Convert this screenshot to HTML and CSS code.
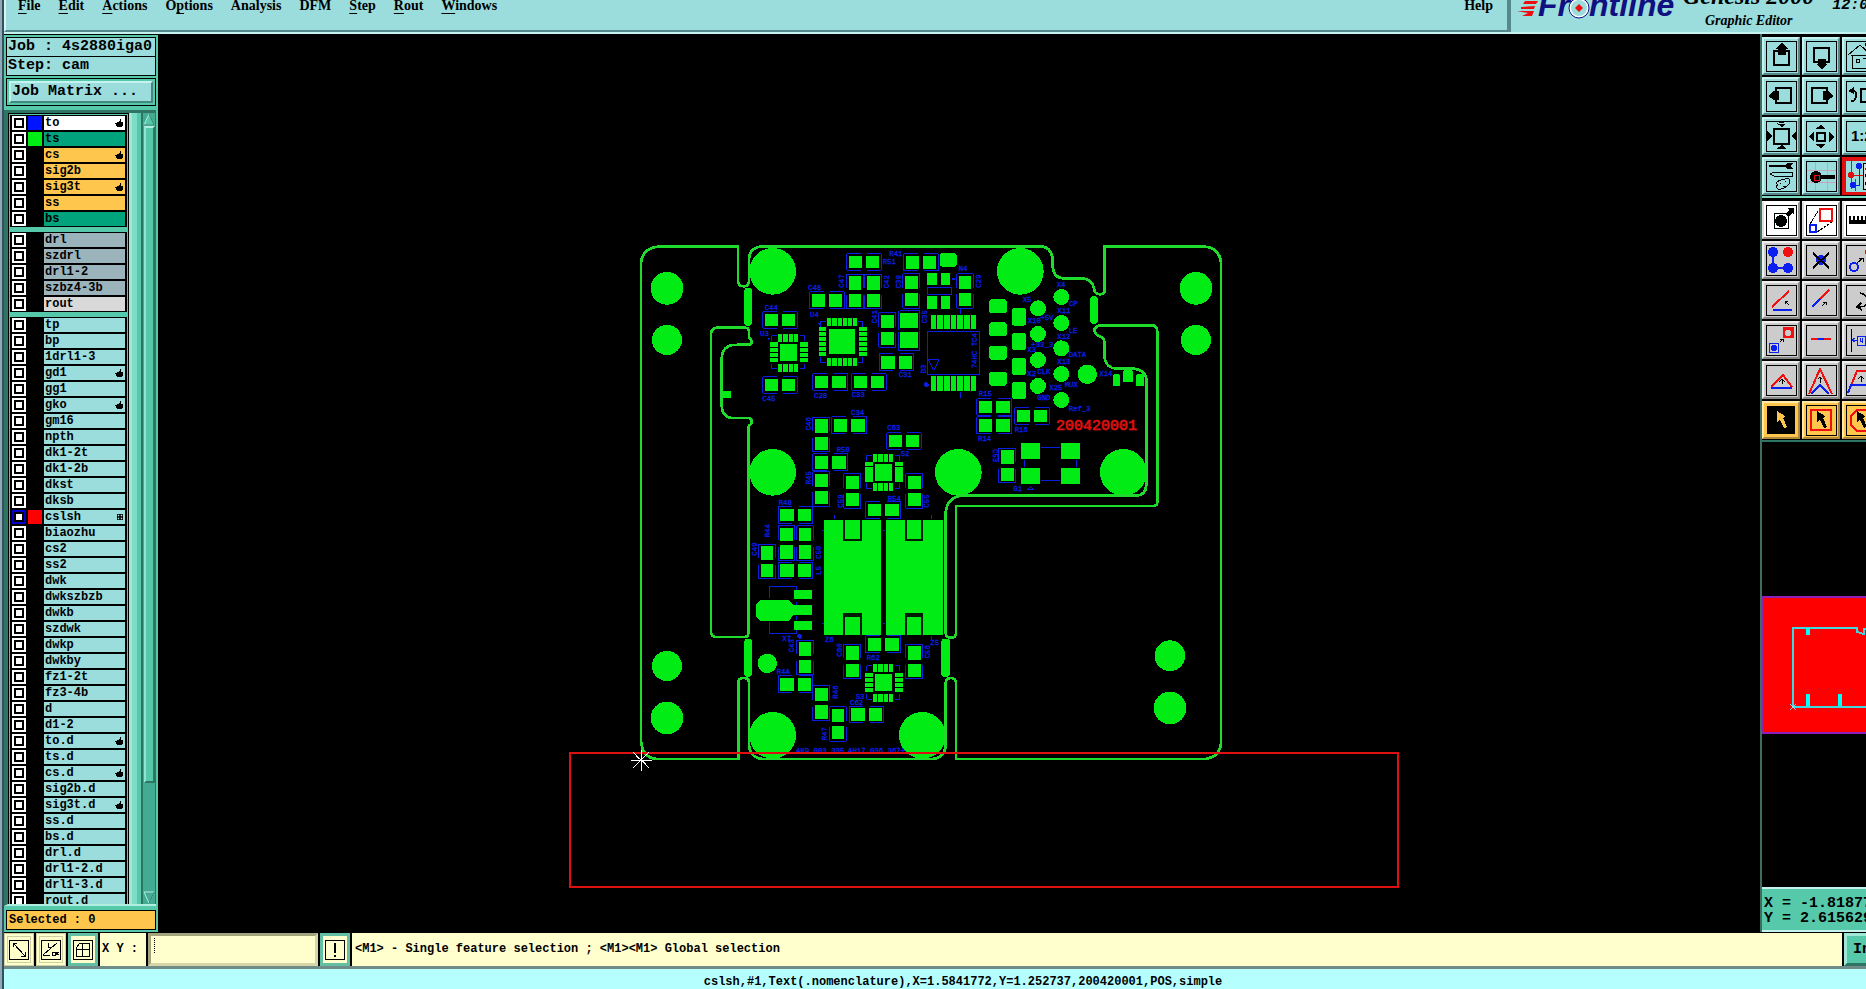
FILE: index.html
```html
<!DOCTYPE html>
<html lang="en">
<head>
<meta charset="utf-8">
<title>Genesis 2000 Graphic Editor</title>
<link rel="stylesheet" href="styles.css">
</head>
<body>
<svg class="defs" aria-hidden="true">
  <defs>
    <symbol id="hand" viewBox="0 0 8 8"><path d="M0 4h2V3h2V2h1V0h1v3h2v4H7v1H2V7H1V5H0z"/></symbol>
    <symbol id="grid" viewBox="0 0 6 6"><path d="M0 0h6v6H0z"/><path d="M1 1h1v1H1zM4 1h1v1H4zM1 4h1v1H1zM4 4h1v1H4z" fill="#9bdcdc" stroke="#9bdcdc" stroke-width=".6"/></symbol>
    <g id="rh"><path class="silk" d="M-10-25H-52V25H-10M10-25H52V25H10"/><path class="pad" d="M-46-19h40v38h-40zM6-19h40v38H6z"/></g>
    <g id="rv"><path class="silk" d="M-25-10V-52H25V-10M-25 10V52H25V10"/><path class="pad" d="M-19-46h38v40h-38zM-19 6h38v40h-38z"/></g>
    <g id="qfn"><path class="silk" d="M-50-34V-50H-34M34-50H50V-34M50 34V50H34M-34 50H-50V34"/>
      <path class="pad" d="M-25-25h51v51h-51z"/>
      <path class="pin" d="M-24-55v24M-8-55v24M8-55v24M24-55v24M-24 34v24M-8 34v24M8 34v24M24 34v24M-55-23h24M-55-7h24M-55 8h24M-55 23h24M35-23h24M35-7h24M35 8h24M35 23h24"/></g>
    <path id="ptr" d="M0 0l8 5-2 2 4 9-3 1-4-8-3 2z"/>
  </defs>
</svg>

<header class="top">
  <nav class="menus">
    <button><u>F</u>ile</button><button><u>E</u>dit</button><button><u>A</u>ctions</button><button>O<u>p</u>tions</button><button>Analysis</button><button>DFM</button><button><u>S</u>tep</button><button><u>R</u>out</button><button><u>W</u>indows</button><button class="help">Help</button>
  </nav>
  <div class="brand">
    <svg class="logo" width="166" height="30" viewBox="0 0 166 30" role="img" aria-label="Frontline">
      <path d="M12 1h13l-2 3H10zM8 7l14-1-1 3H8zM4 11h17l-2 5H9l6-3z" fill="#f00c0c"/>
      <text x="25" y="16" class="logotext">Fr</text>
      <text x="76" y="16" class="logotext">ntline</text>
      <circle cx="66" cy="8" r="9" fill="#9bdcdc" stroke="#fff" stroke-width="2"/>
      <circle cx="66" cy="8" r="10" fill="none" stroke="#101080"/>
      <path d="M66 4l4 4-4 4-4-4z" fill="#f00c0c"/>
    </svg>
    <div class="titles"><strong>Genesis 2000</strong><em>Graphic Editor</em></div>
    <time>12:03</time>
  </div>
</header>

<main class="work">
  <aside class="side">
    <div class="job"><p>Job : 4s2880iga0</p><p>Step: cam</p></div>
    <div class="matrix"><button>Job Matrix ...</button></div>
    <div class="layers">
      <div class="list">
        <div class="group">
          <label><input type="checkbox"><i class="blue"></i><b class="white">to<svg><use href="#hand"/></svg></b></label>
          <label><input type="checkbox"><i class="green"></i><b class="teal">ts</b></label>
          <label><input type="checkbox"><i></i><b class="gold">cs<svg><use href="#hand"/></svg></b></label>
          <label><input type="checkbox"><i></i><b class="gold">sig2b</b></label>
          <label><input type="checkbox"><i></i><b class="gold">sig3t<svg><use href="#hand"/></svg></b></label>
          <label><input type="checkbox"><i></i><b class="gold">ss</b></label>
          <label><input type="checkbox"><i></i><b class="teal">bs</b></label>
        </div>
        <div class="group">
          <label><input type="checkbox"><i></i><b class="slate">drl</b></label>
          <label><input type="checkbox"><i></i><b class="slate">szdrl</b></label>
          <label><input type="checkbox"><i></i><b class="slate">drl1-2</b></label>
          <label><input type="checkbox"><i></i><b class="slate">szbz4-3b</b></label>
          <label><input type="checkbox"><i></i><b class="silver">rout</b></label>
        </div>
        <div class="group">
          <label><input type="checkbox"><i></i><b>tp</b></label>
          <label><input type="checkbox"><i></i><b>bp</b></label>
          <label><input type="checkbox"><i></i><b>1drl1-3</b></label>
          <label><input type="checkbox"><i></i><b>gd1<svg><use href="#hand"/></svg></b></label>
          <label><input type="checkbox"><i></i><b>gg1</b></label>
          <label><input type="checkbox"><i></i><b>gko<svg><use href="#hand"/></svg></b></label>
          <label><input type="checkbox"><i></i><b>gm16</b></label>
          <label><input type="checkbox"><i></i><b>npth</b></label>
          <label><input type="checkbox"><i></i><b>dk1-2t</b></label>
          <label><input type="checkbox"><i></i><b>dk1-2b</b></label>
          <label><input type="checkbox"><i></i><b>dkst</b></label>
          <label><input type="checkbox"><i></i><b>dksb</b></label>
          <label><input type="checkbox" checked><i class="red"></i><b>cslsh<svg class="small"><use href="#grid"/></svg></b></label>
          <label><input type="checkbox"><i></i><b>biaozhu</b></label>
          <label><input type="checkbox"><i></i><b>cs2</b></label>
          <label><input type="checkbox"><i></i><b>ss2</b></label>
          <label><input type="checkbox"><i></i><b>dwk</b></label>
          <label><input type="checkbox"><i></i><b>dwkszbzb</b></label>
          <label><input type="checkbox"><i></i><b>dwkb</b></label>
          <label><input type="checkbox"><i></i><b>szdwk</b></label>
          <label><input type="checkbox"><i></i><b>dwkp</b></label>
          <label><input type="checkbox"><i></i><b>dwkby</b></label>
          <label><input type="checkbox"><i></i><b>fz1-2t</b></label>
          <label><input type="checkbox"><i></i><b>fz3-4b</b></label>
          <label><input type="checkbox"><i></i><b>d</b></label>
          <label><input type="checkbox"><i></i><b>d1-2</b></label>
          <label><input type="checkbox"><i></i><b>to.d<svg><use href="#hand"/></svg></b></label>
          <label><input type="checkbox"><i></i><b>ts.d</b></label>
          <label><input type="checkbox"><i></i><b>cs.d<svg><use href="#hand"/></svg></b></label>
          <label><input type="checkbox"><i></i><b>sig2b.d</b></label>
          <label><input type="checkbox"><i></i><b>sig3t.d<svg><use href="#hand"/></svg></b></label>
          <label><input type="checkbox"><i></i><b>ss.d</b></label>
          <label><input type="checkbox"><i></i><b>bs.d</b></label>
          <label><input type="checkbox"><i></i><b>drl.d</b></label>
          <label><input type="checkbox"><i></i><b>drl1-2.d</b></label>
          <label><input type="checkbox"><i></i><b>drl1-3.d</b></label>
          <label><input type="checkbox"><i></i><b>rout.d</b></label>
        </div>
      </div>
      <div class="edge"></div>
      <div class="scroll">
        <svg width="12" height="13" viewBox="0 0 12 13"><path d="M6 1L1 12h10z" fill="#55c9aa" stroke="#b0efe0"/><path d="M6 1l5 11H1" fill="none" stroke="#2b7a66"/></svg>
        <div class="thumb"></div>
        <svg width="12" height="13" viewBox="0 0 12 13"><path d="M6 12L1 1h10z" fill="#43ab92" stroke="#b0efe0"/><path d="M6 12l5-11" fill="none" stroke="#2b7a66"/></svg>
      </div>
    </div>
    <p class="selected">Selected : 0</p>
  </aside>

  <section class="canvas">
    <svg viewBox="158 34 1602 898" role="img" aria-label="Board layout">
      <g transform="translate(630 235) scale(.33333)">
        <g class="silk">
          <path d="M892 157h73v21h-73zM892 289h157v129H892zM895 374h32l-16 32zM810 228h59v58M805 290v56h65v-58M807 228v56"/>
          <path d="M573 275v-16h16M683 259h16v16M699 367v16h-16M589 383h-16v-16"/>
          <path d="M418 1088v-33h82v20M500 1100v12M500 1142v12M418 1160v35h82v-12"/>
          <path d="M1234 637h55M1234 737h55M1184 675v20M1340 675v20M613 840v12M906 840v12M576 887h6M758 887h8M576 1165h6M758 1165h8M993 222v14M993 472v16M906 1203v12"/>
          <path d="M1192 764l10-9 10 9z"/>
          <circle cx="889" cy="449" r="6" fill="#0a1fe0"/><circle cx="509" cy="1204" r="6" fill="#0a1fe0"/><circle cx="970" cy="132" r="3" fill="#0a1fe0"/><circle cx="568" cy="267" r="2"/><circle cx="417" cy="311" r="2"/>
        </g>
        <g>
          <use href="#rh" x="702" y="81"/><use href="#rh" x="873" y="82"/><use href="#rh" x="591" y="196"/><use href="#rh" x="450" y="255"/><use href="#rh" x="450" y="450"/><use href="#rh" x="601" y="441"/><use href="#rh" x="717" y="441"/><use href="#rh" x="800" y="382"/><use href="#rh" x="658" y="571"/><use href="#rh" x="822" y="618"/><use href="#rh" x="601" y="682"/><use href="#rh" x="1093" y="516"/><use href="#rh" x="1093" y="571"/><use href="#rh" x="1206" y="543"/><use href="#rh" x="497" y="840"/><use href="#rh" x="497" y="1007"/><use href="#rh" x="760" y="825"/><use href="#rh" x="760" y="1228"/><use href="#rh" x="497" y="1348"/><use href="#rh" x="710" y="1439"/>
          <use href="#rv" x="675" y="170"/><use href="#rv" x="730" y="170"/><use href="#rv" x="844" y="168"/><use href="#rv" x="772" y="285"/><use href="#rv" x="574" y="599"/><use href="#rv" x="574" y="762"/><use href="#rv" x="667" y="768"/><use href="#rv" x="853" y="768"/><use href="#rv" x="1005" y="168"/><use href="#rv" x="1132" y="692"/><use href="#rv" x="411" y="980"/><use href="#rv" x="470" y="925"/><use href="#rv" x="525" y="925"/><use href="#rv" x="525" y="1268"/><use href="#rv" x="667" y="1280"/><use href="#rv" x="853" y="1280"/><use href="#rv" x="574" y="1405"/><use href="#rv" x="624" y="1467"/>
          <use href="#qfn" x="475" y="352"/><use href="#qfn" x="760" y="711"/><use href="#qfn" x="760" y="1343"/>
        </g>
        <g class="pad">
          <path d="M810 234h54v44h-54zM810 292h54v47h-54zM891 114h30v36h-30zM933 114h27v36h-27zM891 183h30v39h-30zM933 183h27v39h-27zM597 282h78v75h-78z"/>
          <path d="M1173 625h56v46h-56zM1293 625h56v46h-56zM1173 699h56v47h-56zM1293 699h56v47h-56z"/>
          <path d="M492 1065h54v27h-54zM492 1158h54v27h-54zM378 1108l14-13h84l14 15h56v30h-56l-14 18h-84l-14-14z"/>
          <path d="M582 855h171v345H582zM768 855h171v345H768zM275 468h28v21h-28z"/>
          <rect x="930" y="55" width="50" height="40" rx="8"/>
          <rect x="1077" y="193" width="54" height="41" rx="10"/><rect x="1077" y="262" width="54" height="41" rx="10"/><rect x="1077" y="333" width="54" height="41" rx="10"/><rect x="1077" y="411" width="54" height="41" rx="10"/>
          <rect x="1146" y="220" width="42" height="52" rx="8"/><rect x="1146" y="294" width="42" height="51" rx="8"/><rect x="1146" y="369" width="42" height="51" rx="8"/><rect x="1146" y="441" width="42" height="51" rx="8"/>
          <rect x="1449" y="418" width="21" height="35" rx="5"/><rect x="1479" y="406" width="30" height="35" rx="5"/><rect x="1518" y="418" width="24" height="35" rx="5"/>
          <rect x="343" y="158" width="23" height="115" rx="11"/><rect x="343" y="1211" width="23" height="115" rx="11"/><rect x="934" y="1211" width="26" height="115" rx="11"/><rect x="1380" y="183" width="24" height="84" rx="11"/>
          <circle cx="428" cy="109" r="70"/><circle cx="428" cy="712" r="70"/><circle cx="1171" cy="109" r="70"/><circle cx="985" cy="712" r="70"/><circle cx="1480" cy="712" r="70"/><circle cx="428" cy="1501" r="70"/><circle cx="877" cy="1501" r="70"/>
          <circle cx="111" cy="160" r="49"/><circle cx="111" cy="315" r="45"/><circle cx="1698" cy="160" r="49"/><circle cx="1698" cy="315" r="45"/><circle cx="111" cy="1293" r="45"/><circle cx="111" cy="1449" r="49"/><circle cx="1620" cy="1262" r="46"/><circle cx="1620" cy="1419" r="49"/><circle cx="412" cy="1285" r="29"/>
          <circle cx="1224" cy="220" r="24"/><circle cx="1224" cy="297" r="24"/><circle cx="1224" cy="375" r="24"/><circle cx="1224" cy="453" r="24"/><circle cx="1294" cy="186" r="24"/><circle cx="1294" cy="264" r="24"/><circle cx="1294" cy="340" r="24"/><circle cx="1294" cy="417" r="24"/><circle cx="1294" cy="495" r="24"/><circle cx="1372" cy="418" r="29"/>
        </g>
        <path class="dip" d="M911 240v42M931 240v42M951 240v42M971 240v42M991 240v42M1011 240v42M1031 240v42M911 423v44M931 423v44M951 423v44M971 423v44M991 423v44M1011 423v44M1031 423v44"/>
        <path class="pin" d="M598 249v23M614 249v23M630 249v23M645 249v23M660 249v23M676 249v23M598 369v23M614 369v23M630 369v23M645 369v23M660 369v23M676 369v23M567 283h21M567 298h21M567 313h21M567 328h21M567 343h21M567 358h21M688 283h23M688 298h23M688 313h23M688 328h23M688 343h23M688 358h23"/>
        <path class="notch" d="M643 855v60h50v-60M829 855v60h47v-60M643 1200v-60h50v60M829 1200v-60h47v60"/>
        <path class="notch wide" d="M640 1140h56M826 1140h53"/>
        <path class="outline" d="M326 34H90Q33 38 33 90V1515Q35 1568 80 1572H325V1340Q326 1329 341 1329Q357 1329 357 1342V1530Q360 1570 400 1572H905Q945 1570 947 1530V1345Q948 1329 963 1329Q978 1329 978 1345V1572H1725Q1773 1565 1773 1520V84Q1770 38 1720 34H1424V165Q1424 178 1409 178Q1394 178 1392 160Q1385 130 1355 130H1300Q1270 128 1268 95V75Q1265 34 1230 34H400Q357 36 357 75V140Q355 154 341 154Q326 154 324 140V34"/>
        <path class="outline" d="M243 300Q243 278 262 278H345Q357 278 357 290V308Q370 318 362 328L310 330Q275 334 275 375V510Q277 549 310 549H358Q370 555 362 568Q355 572 355 580V1195Q355 1206 343 1206H258Q243 1206 243 1190Z"/>
        <path class="outline" d="M1410 271Q1393 275 1393 288Q1398 303 1415 306Q1424 312 1424 330V370Q1430 400 1460 401H1510Q1549 405 1549 435V750Q1547 781 1520 781H1000Q950 785 947 835V1195Q948 1208 963 1208Q978 1208 978 1195V813H1570Q1582 813 1582 800V290Q1582 271 1565 271Z"/>
        <g class="label">
          <text x="404" y="224">C44</text><text x="390" y="302">U3</text><text x="397" y="497">C45</text><text x="534" y="166">C48</text><text x="540" y="245">U4</text><text x="758" y="86">R51</text><text x="778" y="64">R41</text><text x="552" y="488">C28</text><text x="665" y="486">C33</text><text x="806" y="426">C31</text><text x="663" y="541">C34</text><text x="772" y="586">C63</text><text x="620" y="652">R50</text><text x="812" y="662">S2</text><text x="446" y="809">R48</text><text x="773" y="797">R54</text><text x="986" y="107">N4</text>
          <text x="1178" y="200">X5</text><text x="1280" y="156">X4</text><text x="1317" y="213">CP</text><text x="1282" y="233">X11</text><text x="1193" y="264">X10</text><text x="1231" y="256">+5V</text><text x="1316" y="294">LE</text><text x="1282" y="311">X12</text><text x="1192" y="350">X3</text><text x="1204" y="337">+33_3</text><text x="1316" y="367">DATA</text><text x="1282" y="388">X13</text><text x="1192" y="422">X2</text><text x="1222" y="417">CLK</text><text x="1304" y="456">MUX</text><text x="1258" y="465">X25</text><text x="1408" y="423">X14</text><text x="1222" y="496">GND</text><text x="1316" y="529">Ref_3</text><text x="1046" y="483">R15</text><text x="1044" y="618">R14</text><text x="1154" y="590">R16</text><text x="1150" y="769">G1</text>
          <text x="457" y="1217">X7</text><text x="585" y="1221">Z6</text><text x="901" y="1231">Z5</text><text x="710" y="1275">R62</text><text x="440" y="1317">R4A</text><text x="677" y="1391">S3</text><text x="660" y="1410">C62</text>
          <text x="498" y="1553">AK9 003 335</text><text x="654" y="1553">AH17 036 367+</text>
          <text transform="translate(643 158) rotate(-90)">C47</text><text transform="translate(777 160) rotate(-90)">C42</text><text transform="translate(812 160) rotate(-90)">C30</text><text transform="translate(742 265) rotate(-90)">C41</text><text transform="translate(890 265) rotate(-90)">C35</text><text transform="translate(887 415) rotate(-90)">D3</text><text transform="translate(543 586) rotate(-90)">C46</text><text transform="translate(543 748) rotate(-90)">R45</text><text transform="translate(640 818) rotate(-90)">C59</text><text transform="translate(896 818) rotate(-90)">C55</text><text transform="translate(421 907) rotate(-90)">R44</text><text transform="translate(380 962) rotate(-90)">C49</text><text transform="translate(572 972) rotate(-90)">C50</text><text transform="translate(572 1020) rotate(-90)">L5</text><text transform="translate(1052 158) rotate(-90)">C29</text><text transform="translate(1040 400) rotate(-90)">74HC TC4</text><text transform="translate(1088 642) rotate(90)">C53</text><text transform="translate(493 1252) rotate(-90)">C43</text><text transform="translate(636 1265) rotate(-90)">C60</text><text transform="translate(900 1270) rotate(-90)">C56</text><text transform="translate(624 1391) rotate(-90)">R46</text><text transform="translate(592 1516) rotate(-90)">R47</text>
        </g>
        <text x="1278" y="586" class="serial">200420001</text>
      </g>
      <path d="M570 753h828v134H570z" fill="none" stroke="#e01010" stroke-width="2"/>
      <path d="M631 760h21M641 750v21M633 752l16 16M649 752l-16 16M636 756l10 8" fill="none" stroke="#fff"/>
    </svg>
  </section>

  <aside class="tools">
    <div class="pad-grid">
      <button aria-label="Pan up"><svg viewBox="2 2 34 34"><path class="box" d="M4 4h30v30H4z"/><path class="k2" d="M12 14h15v14H12z"/><path d="M20 6l7 6h-3v6h-8v-6h-3z"/></svg></button>
      <button aria-label="Pan down"><svg viewBox="2 2 34 34"><path class="box" d="M4 4h30v30H4z"/><path class="k2" d="M12 11h15v14H12z"/><path d="M20 32l-6-5h2v-5h8v5h2z"/></svg></button>
      <button aria-label="Home"><svg viewBox="2 2 34 34"><path class="box" d="M4 4h30v30H4z"/><path class="k1" d="M6 18L18 8l10 9M9 18H28M10 18v13h20M14 22h3v3h-3zM21 21h4v10M23 9V6h3v6"/></svg></button>
      <button aria-label="Pan left"><svg viewBox="2 2 34 34"><path class="box" d="M4 4h30v30H4z"/><path class="k2" d="M14 11h15v15H14z"/><path d="M6 19l6-5h5v9h-5z"/></svg></button>
      <button aria-label="Pan right"><svg viewBox="2 2 34 34"><path class="box" d="M4 4h30v30H4z"/><path class="k2" d="M10 11h15v15H10z"/><path d="M32 19l-6-5h-5v9h5z"/></svg></button>
      <button aria-label="Previous view"><svg viewBox="2 2 34 34"><path class="box" d="M4 4h30v30H4z"/><path class="k2" d="M19 12h14v13H19zM9 14q6-1 5 5t-5 5"/><path d="M6 14l6-4v7z"/></svg></button>
      <button aria-label="Zoom in"><svg viewBox="2 2 34 34"><path class="box" d="M4 4h30v30H4z"/><path class="k2" d="M12 12h15v15H12z"/><path d="M14 7h11l-3-1V5h-5v1zM14 6h11l-5 4zM14 32h11l-5-4zM5 14v10l5-5zM34 14v10l-5-5z"/></svg></button>
      <button aria-label="Zoom out"><svg viewBox="2 2 34 34"><path class="box" d="M4 4h30v30H4z"/><path class="k2" d="M15 16h8v8h-8z"/><path d="M13 12h11l-5-4zM13 27h11l-5 4zM12 14v11l-5-5zM27 14v11l5-5z"/></svg></button>
      <button aria-label="Scale"><svg viewBox="2 2 34 34"><path class="box" d="M4 4h30v30H4z"/><text x="9" y="24" class="scale">1:2</text></svg></button>
      <button aria-label="Setup"><svg viewBox="2 2 34 34"><path class="box" d="M4 4h30v30H4z"/><path d="M7 8h16l3-2h5l-3 3 3 3h-5l-3-2H7z"/><path class="k1" d="M8 17l4-2h18v4H12zM15 25q6-4 12-3 2 4-2 7-4 4-9 3-3-3 0-4-3-2-1-3zM18 26h1M23 24h1M21 29h2"/></svg></button>
      <button aria-label="Probe"><svg viewBox="2 2 34 34"><path d="M4 13h30M4 25h30M13 4v30M25 4v30" stroke="#c3a5bd"/><path class="box" d="M4 4h30v30H4z"/><circle cx="14" cy="20" r="6"/><path d="M14 18h19v4H14z"/><path d="M12 18h5v5h-5z" fill="none" stroke="#e01010"/></svg></button>
      <button aria-label="Nets" class="hot"><svg viewBox="2 2 34 34"><path d="M2 2h34v34H2z" fill="none" stroke="#e01010" stroke-width="3"/><path d="M9 2v30M9 18h12M13 22v12" stroke="#e01010" fill="none"/><circle cx="9" cy="18" r="3" fill="#e01010"/><path d="M17 9v19h-6" stroke="#0b1ff0" fill="none"/><circle cx="17" cy="9" r="3" fill="#0b1ff0"/><circle cx="11" cy="28" r="3" fill="#0b1ff0"/><path d="M21 6h9v26h-9z" fill="#ddd" stroke="#000"/><path d="M23 17h3v3h-3zM23 25h3v3h-3z"/><circle cx="25" cy="12" r="2" fill="#e01010"/></svg></button>
    </div>
    <div class="pad-grid lower">
      <button class="w" aria-label="Move feature"><svg viewBox="2 2 34 34"><path class="box" d="M4 4h30v30H4zM12 12h14v15H12z"/><circle cx="19" cy="20" r="6"/><path d="M23 13l4-4-1-2h6v6l-2-1-4 4z"/></svg></button>
      <button class="w" aria-label="Resize feature"><svg viewBox="2 2 34 34"><path class="box" d="M4 4h30v30H4z"/><path d="M18 8h12v12H18z" class="r2"/><path d="M8 24h6v7H8z" class="b2"/><path d="M8 23l9-14M15 31l15-10" stroke="#000" stroke-dasharray="3 1"/></svg></button>
      <button class="w" aria-label="Measure"><svg viewBox="2 2 34 34"><path class="box" d="M4 4h30v30H4z"/><path d="M7 15v8h29v-8h-1v4h-2v-4h-2v4h-2v-4h-2v4h-2v-4h-2v4h-2v-4h-2v4h-2v-4h-2v4h-2v-4h-2v4H9v-4z"/></svg></button>
      <button class="g" aria-label="Copy points"><svg viewBox="2 2 34 34"><path class="box" d="M4 4h30v30H4z"/><path class="b2" d="M11 11v16h15"/><g fill="#0b1ff0"><circle cx="11" cy="11" r="5"/><circle cx="11" cy="27" r="5"/><circle cx="26" cy="27" r="5"/></g><circle cx="26" cy="11" r="5" fill="#f01010"/></svg></button>
      <button class="g" aria-label="Delete"><svg viewBox="2 2 34 34"><path class="box" d="M4 4h30v30H4z"/><circle cx="19" cy="19" r="5" fill="#0b1ff0"/><path class="k2" d="M11 12l16 15M27 12L11 27"/></svg></button>
      <button class="g" aria-label="Move point"><svg viewBox="2 2 34 34"><path class="box" d="M4 4h30v30H4z"/><circle cx="12" cy="26" r="4" class="b2"/><circle cx="28" cy="11" r="5" fill="#f01010"/><path class="k1" d="M15 22l6-5M17 17h4v4"/></svg></button>
      <button class="g" aria-label="Rotate line"><svg viewBox="2 2 34 34"><path class="box" d="M4 4h30v30H4z"/><path class="r2" d="M10 26L27 10"/><path class="b2" d="M11 29h19"/><path class="k1" d="M27 24l-4-4M23 23v-3h3"/></svg></button>
      <button class="g" aria-label="Extend line"><svg viewBox="2 2 34 34"><path class="box" d="M4 4h30v30H4z"/><path class="r2" d="M17 19L27 9"/><path class="b2" d="M10 26l8-8"/><path class="k1" d="M20 25l4-4M21 21h3v3"/></svg></button>
      <button class="g" aria-label="Arc"><svg viewBox="2 2 34 34"><path class="box" d="M4 4h30v30H4z"/><path d="M18 12q8 2 8 8t-10 6M19 22l-4 4 5 3" fill="none" stroke="#000" stroke-width="1.500"/></svg></button>
      <button class="g" aria-label="Swap symbol"><svg viewBox="2 2 34 34"><path class="box" d="M4 4h30v30H4z"/><path d="M7 22h9v9H7z" fill="none" stroke="#0b1ff0"/><circle cx="12" cy="27" r="3" fill="#0b1ff0"/><path d="M21 6h11v11H21z" fill="#f01010"/><circle cx="26" cy="12" r="3" fill="#ccc"/><path class="k1" d="M18 21l3-3M18 18h3v3"/></svg></button>
      <button class="g" aria-label="Break line"><svg viewBox="2 2 34 34"><path class="box" d="M4 4h30v30H4z"/><path class="r2" d="M9 18h20"/><path class="b2" d="M16 18h6"/></svg></button>
      <button class="g" aria-label="Offset"><svg viewBox="2 2 34 34"><path class="box" d="M4 4h30v30H4z"/><path class="k1" d="M9 8v23"/><path d="M15 15h8v9h-8zM15 19h-5M13 17l-3 2 3 2M23 19h5M18 17v3h3M20 17v5" fill="none" stroke="#0b1ff0"/></svg></button>
      <button class="g" aria-label="Triangle"><svg viewBox="2 2 34 34"><path class="box" d="M4 4h30v30H4z"/><path class="r2" d="M9 26l12-12 9 12"/><path class="b2" d="M9 27h21"/><path class="k1" d="M20 23v-5M17 21l3-3 3 3"/></svg></button>
      <button class="g" aria-label="Stretch peak"><svg viewBox="2 2 34 34"><path class="box" d="M4 4h30v30H4z"/><path class="r2" d="M7 33L18 8l12 25"/><path class="b2" d="M9 33l9-9 9 9"/><path class="k1" d="M18 22v-6M16 18l2-2 2 2"/></svg></button>
      <button class="g" aria-label="Stretch edge"><svg viewBox="2 2 34 34"><path class="box" d="M4 4h30v30H4z"/><path class="r2" d="M6 32l9-22h12l9 22"/><path class="b2" d="M6 32l3-8h25"/><path class="k1" d="M19 21v-6M16 18l3-3 3 3"/></svg></button>
      <button class="o" aria-label="Select"><svg viewBox="2 2 34 34"><path d="M5 5h28v28H5z"/><use href="#ptr" x="15" y="10" fill="#ffc64d"/></svg></button>
      <button class="o" aria-label="Select in rectangle"><svg viewBox="2 2 34 34"><path class="box" d="M4 4h30v30H4z"/><path class="r2" d="M9 9h20v20H9z"/><use href="#ptr" x="15" y="10"/></svg></button>
      <button class="o" aria-label="Select in polygon"><svg viewBox="2 2 34 34"><path class="box" d="M4 4h30v30H4z"/><path class="r2" d="M15 9h14l6 6v9l-6 6H15l-6-6v-9z"/><use href="#ptr" x="15" y="10"/></svg></button>
    </div>
    <div class="overview">
      <svg viewBox="0 0 106 138"><path d="M0 0h106v138H0z" fill="#f00"/><path d="M106 1H1v136h105" fill="none" stroke="#8c1fb8" stroke-width="2"/><path d="M106 33h-4v5l-7-2v-4H31v79h75" fill="none" stroke="#3fd8e0" stroke-width="2"/><path d="M44 32h4v7h-4zM44 98h4v12h-4zM76 98h4v12h-4z" fill="#0ff"/><path d="M28 108l6 6M34 108l-6 6" stroke="#9bdcdc"/></svg>
    </div>
    <div class="coords"><p>X = -1.8187743</p><p>Y = 2.6156292</p></div>
  </aside>
</main>

<form class="command">
  <button type="button" aria-label="Diagonal"><svg viewBox="0 0 22 22"><path class="k1" d="M1 1h19v19H1zM5 4l12 13M5 8V4h4M13 17h4v-4"/></svg></button>
  <button type="button" aria-label="Angle"><svg viewBox="0 0 22 22"><path class="k1" d="M1 1h19v19H1zM3 16L17 4M3 16h7M8 4v4h3M12 13h3v3h-3zM16 13v3M19 13l-3 2 3 1"/></svg></button>
  <button type="button" aria-label="Grid" class="on"><svg viewBox="0 0 22 22"><path class="k1" d="M1 1h19v19H1zM4 9l4-5h9v13H4zM10 4v13M4 10h13"/></svg></button>
  <label for="xy">X Y :</label>
  <input id="xy" type="text">
  <button type="button" aria-label="Alert" class="on"><svg viewBox="0 0 22 22"><path class="k1" d="M1 1h19v19H1z"/><path class="k2" d="M11 4v10M11 16v2"/></svg></button>
  <output>&lt;M1&gt; - Single feature selection ; &lt;M1&gt;&lt;M1&gt; Global selection</output>
  <button type="button" class="inch">Inch</button>
</form>
<footer class="status">cslsh,#1,Text(.nomenclature),X=1.5841772,Y=1.252737,200420001,POS,simple</footer>
</body>
</html>
```

FILE: styles.css
```css
* { box-sizing: border-box; }
body {
  margin: 0;
  height: 100vh;
  padding-left: 4px;
  display: flex;
  flex-direction: column;
  overflow: hidden;
  background: linear-gradient(90deg, #8fa9b8 0 2px, #35505c 2px 4px, #000 4px);
  font: bold 12px "Liberation Mono", monospace;
  color: #000;
}
p { margin: 0; }
button { font: inherit; color: inherit; padding: 0; cursor: pointer; }
.defs { position: absolute; width: 0; height: 0; }

/* Menu bar */
.top { display: flex; height: 34px; flex: none; background: #9bdcdc; border-bottom: 2px solid #c4f3f0; overflow: hidden; }
.menus {
  flex: 1;
  display: flex;
  align-items: flex-start;
  gap: 18px;
  padding: 0 14px 0 12px;
  border-left: 2px solid #d6f6f4;
  border-bottom: 2px solid #55898b;
  border-right: 2px solid #55898b;
}
.menus button { border: 0; background: none; font: bold 14px/12px "Liberation Serif", serif; }
.menus u { text-underline-offset: 3px; text-decoration-thickness: 1px; }
.menus .help { margin-left: auto; }
.brand { width: 357px; flex: none; display: flex; gap: 4px; padding-left: 2px; border-left: 2px solid #55898b; overflow: hidden; }
.logo { flex: none; }
.logotext { font: italic bold 32px "Liberation Sans", sans-serif; fill: #101080; }
.titles { display: flex; flex-direction: column; align-items: center; flex: none; font-family: "Liberation Serif", serif; font-style: italic; }
.titles strong { font-size: 24px; line-height: 14px; margin-top: -11px; }
.titles em { font-size: 14px; line-height: 16px; margin-top: 10px; }
.brand time { flex: none; padding-left: 14px; font-style: italic; font-size: 15px; line-height: 12px; }

.work { flex: 1; display: flex; min-height: 0; }

/* Layer side bar */
.side { width: 154px; flex: none; display: flex; flex-direction: column; background: #55c9aa; padding: 2px 2px 2px; font-size: 15px; border-top: 1px solid #000; }
.job { border: 1px solid #000; background: #9bdcdc; white-space: nowrap; overflow: hidden; }
.job p { padding-left: 1px; line-height: 18px; }
.job p + p { border-top: 1px solid #000; }
.matrix { margin-top: 2px; border: 1px solid #000; padding: 2px; }
.matrix button {
  display: block;
  width: 100%;
  text-align: left;
  padding-left: 1px;
  line-height: 18px;
  background: #9bdcdc;
  border: 2px solid;
  border-color: #c4f3f0 #43897f #43897f #c4f3f0;
}
.layers { flex: 1; min-height: 0; display: flex; margin: 4px 0 4px -2px; border-top: 3px solid #2f7563; border-left: 4px solid #2f7563; border-bottom: 2px solid #b0efe0; font-size: 12px; }
.list { width: 121px; flex: none; overflow: hidden; display: flex; flex-direction: column; gap: 5px; padding: 1px 1px 0; border: 1px solid #000; border-bottom: 0; }
.group { flex: none; display: flex; flex-direction: column; gap: 2px; padding: 1px 2px; background: #000; }
.group label { display: grid; grid-template-columns: 14px 14px 1fr; gap: 2px; height: 14px; }
.group input { appearance: none; width: 14px; height: 14px; margin: 0; background: #fff; border: 2px solid #fff; box-shadow: inset 0 0 0 2px #000; }
.group input:checked { border-color: #0000c8; }
.group b { display: flex; justify-content: space-between; align-items: center; padding: 0 2px 0 1px; line-height: 14px; background: #9bdcdc; }
.group svg { width: 8px; height: 8px; }
.group svg.small { width: 6px; height: 6px; }
.group .white { background: #fff; }
.group .teal { background: #00a37c; }
.group .gold { background: #ffc64d; }
.group .slate { background: #9bb3bb; }
.group .silver { background: #d9d9d9; }
.blue { background: #0014ff; }
.green { background: #00ec14; }
.red { background: #f00; }
.edge { width: 8px; flex: none; margin-right: 4px; background: #7ddcc4; border-left: 3px solid #9fe8d6; }
.scroll { flex: 1; margin-right: 1px; display: flex; flex-direction: column; align-items: center; background: #43ab92; border: 1px solid #2f7563; border-width: 0 1px 0 2px; }
.thumb { width: 11px; flex: 0 1 83%; background: #55c9aa; border: 2px solid; border-color: #b0efe0 #2f7563 #2f7563 #8fe6d0; margin-bottom: auto; }
.selected { font-size: 12px; line-height: 18px; padding-left: 2px; border: 1px solid #000; background: #ffc64d; }

/* Board canvas */
.canvas { flex: 1; min-width: 0; background: #000; }
.canvas svg { display: block; width: 100%; height: 100%; shape-rendering: crispEdges; }
.pad { fill: #00ec14; }
.pin { stroke: #00ec14; stroke-width: 13; fill: none; }
.dip { stroke: #00ec14; stroke-width: 17; fill: none; }
.silk { stroke: #0a1fe0; stroke-width: 3; fill: none; }
.outline { stroke: #1fdc2c; stroke-width: 8; fill: none; }
.notch { stroke: #001c00; stroke-width: 7; fill: none; }
.notch.wide { stroke-width: 11; }
.label { font: 22px "Liberation Mono", monospace; fill: #0a1fe0; stroke: #0a1fe0; }
.serial { font: 45px "Liberation Mono", monospace; fill: #e01010; stroke: #e01010; stroke-width: 2; }

/* Tool panel */
.tools { width: 106px; flex: none; display: flex; flex-direction: column; border-left: 2px solid #3f6d5f; overflow: hidden; }
.pad-grid { display: grid; grid-template-columns: repeat(3, 38px); grid-auto-rows: 38px; gap: 2px; padding: 3px 0 1px; border-bottom: 2px solid #7ddcc4; }
.pad-grid button { background: #9bdcdc; border: 2px solid; border-color: #c4f3f0 #55898b #55898b #c4f3f0; }
.pad-grid svg { display: block; width: 34px; height: 34px; shape-rendering: crispEdges; }
.pad-grid .w { background: #fff; border-color: #fff #999 #999 #ddd; }
.pad-grid .g { background: #ccc; border-color: #eee #888 #888 #eee; }
.pad-grid .o { background: #ffc64d; border-color: #ffe9a8 #b0883a #b0883a #ffe9a8; }
.pad-grid .hot { border-color: #e01010; }
.box { fill: none; stroke: #000; }
.k1 { fill: none; stroke: #000; }
.k2 { fill: none; stroke: #000; stroke-width: 2; }
.r2 { fill: none; stroke: #f01010; stroke-width: 2; }
.b2 { fill: none; stroke: #0b1ff0; stroke-width: 2; }
.scale { font: bold 15px "Liberation Sans", sans-serif; }
.lower { border-bottom-color: #2f7563; }
.overview { flex: 1; display: flex; align-items: center; }
.overview svg { display: block; width: 106px; height: 138px; flex: none; shape-rendering: crispEdges; }
.coords { flex: none; background: #55c9aa; border-top: 2px solid #c4f3f0; border-bottom: 2px solid #c4f3f0; padding: 7px 2px 4px; font-size: 15px; line-height: 15px; white-space: nowrap; }

/* Command line */
.command { flex: none; display: flex; height: 34px; gap: 2px; margin: 0; padding-top: 1px; background: #000; overflow: hidden; }
.command > button { width: 30px; flex: none; background: #ffffce; border: 4px double #cfcfa0; display: flex; align-items: center; justify-content: center; }
.command > .on { border: 3px solid #62bfa4; }
.command svg { width: 22px; height: 22px; flex: none; shape-rendering: crispEdges; }
.command label { width: 46px; flex: none; padding-left: 2px; line-height: 32px; background: #ffffce; font-size: 12px; white-space: nowrap; }
.command input {
  width: 170px;
  flex: none;
  background: repeating-linear-gradient(#000 0 1px, #ffffce 1px 2px) 3px 2px / 1px 16px no-repeat #ffffce;
  border: 3px solid;
  border-color: #a3a37c #d6d6a8 #d6d6a8 #a3a37c;
  outline: 0;
  font: inherit;
}
.command output { flex: 1; background: #ffffce; line-height: 32px; padding-left: 3px; white-space: nowrap; }
.command > .inch { width: 22px; justify-content: flex-start; overflow: hidden; padding-left: 6px; background: #55c9aa; border: 3px solid; border-color: #9fe8d6 #2f7563 #2f7563 #9fe8d6; border-right: 0; font-size: 15px; }
.status { flex: none; height: 23px; border-top: 3px solid #6f8c88; background: #b5ffff; line-height: 26px; padding-left: 56px; text-align: center; overflow: hidden; }
```
